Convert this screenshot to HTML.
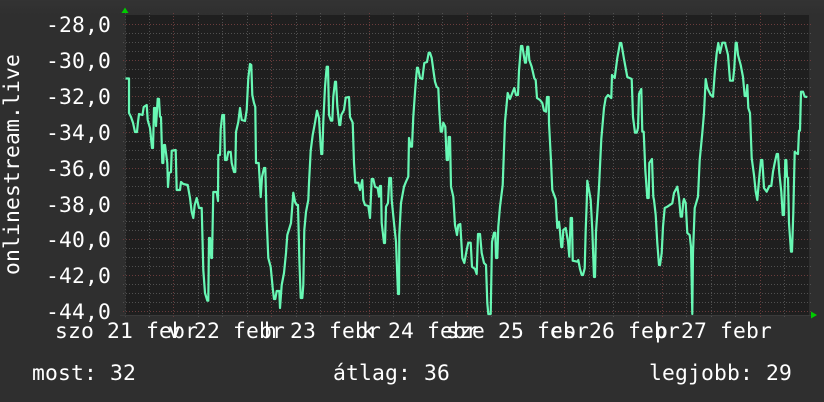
<!DOCTYPE html>
<html><head><meta charset="utf-8">
<style>
html,body{margin:0;padding:0;background:#2f2f2f;width:824px;height:402px;overflow:hidden}
svg{display:block}
text{font-family:"DejaVu Sans Mono","Liberation Mono",monospace;font-size:21.33px;letter-spacing:.16px;fill:#fff;white-space:pre}
</style></head><body>
<svg width="824" height="402" viewBox="0 0 824 402" xmlns="http://www.w3.org/2000/svg">
<defs><linearGradient id="top" x1="0" y1="0" x2="0" y2="1"><stop offset="0" stop-color="#333"/><stop offset="1" stop-color="#2f2f2f"/></linearGradient></defs>
<rect width="824" height="402" fill="#2f2f2f"/>
<rect width="824" height="15" fill="url(#top)"/>
<rect x="125" y="15" width="684" height="301" fill="#1f1f1f"/>
<g shape-rendering="crispEdges" fill="none" stroke-width="1" stroke-dasharray="1 2">
<path stroke="#505050" d="M123 33.500H811M123 42.500H811M123 51.500H811M123 69.500H811M123 78.500H811M123 87.500H811M123 105.500H811M123 114.500H811M123 123.500H811M123 141.500H811M123 150.500H811M123 159.500H811M123 177.500H811M123 186.500H811M123 195.500H811M123 212.500H811M123 221.500H811M123 230.500H811M123 248.500H811M123 257.500H811M123 266.500H811M123 284.500H811M123 293.500H811M123 302.500H811"/>
<path stroke="#505050" d="M125.500 13V318M149.500 13V318M198.500 13V318M222.500 13V318M247.500 13V318M296.500 13V318M320.500 13V318M344.500 13V318M393.500 13V318M418.500 13V318M442.500 13V318M491.500 13V318M515.500 13V318M540.500 13V318M589.500 13V318M613.500 13V318M638.500 13V318M686.500 13V318M711.500 13V318M735.500 13V318M784.500 13V318"/>
<path stroke="#6a3c3c" d="M123 24.500H811M123 60.500H811M123 96.500H811M123 132.500H811M123 168.500H811M123 203.500H811M123 239.500H811M123 275.500H811M123 311.500H811"/>
<path stroke="#6a3c3c" d="M173.500 13V318M271.500 13V318M369.500 13V318M467.500 13V318M564.500 13V318M662.500 13V318M760.500 13V318"/>
</g>
<path d="M120 315.500H811" stroke="#3a3a3a" stroke-width="1" shape-rendering="crispEdges"/>
<path d="M125.500 12V318" stroke="#3a3a3a" stroke-width="1" shape-rendering="crispEdges" opacity=".5"/>
<polygon points="125,7.500 128.500,13 121.500,13" fill="#0c0"/>
<polygon points="811,311.500 817,315 811,318.500" fill="#0c0"/>
<polyline fill="none" stroke="#68f8b4" stroke-width="2.2" stroke-linejoin="round" points="125.500,78.500 129,78.500 129,113 131,117 133,122.700 135,132 137,132 138,122 139,114 142.500,115 143.700,107 146.700,105 147.700,120 150,128 152,148 153,148 154,108 155.300,108 156,126 157.700,98.700 159,99 160,116.700 161,117 162.300,163 163.300,163 164,145 165,145 167.300,163 168,187 169,173 171,172 171.700,150.700 175.700,150 176.700,190 180,190 181,182 183.300,184 187.700,185 190,198 191.700,212 193.300,218 194.700,205 196.700,198 199,208 201.700,208 203.300,270 205,293 207.300,300.700 208.300,300.700 209,238 210,238 211.300,258 212,258 213.300,192 216.700,192 218,201 218.300,155 220,155 220.700,129 222.300,115 224,115 225,160 226.700,160 228.300,152 230.700,152 231.700,163 234,172 235.300,172 236,132 238.300,122 240,108 241.700,120 245,121 246.700,110 248.300,78 250,64 251.300,65 252.300,95 254,103 255.300,107 256,163 258.700,163 260.700,197 262,177 264,168 265.300,168 266.700,220 268.300,258 270.700,267 272.700,288 274,299 275.300,299 276.700,291 279.300,291 280,308 281.700,285 284,273 286,253 287.300,235 291,223 293.300,192.700 295,201.700 296.700,205 298,205 299.300,258 300.700,298 302.300,298 303.300,285 304.300,230 306,212 308.300,200 309,183 310.700,150.700 312.700,135 315,122.700 317,110.700 319,118 320.700,146.700 321.300,154 322.300,154 323.300,121.700 325,87 326.700,66.700 328,66.700 329,115 331,120.700 332.300,120.700 333.300,96.700 335,81.700 336,81.700 337.300,106 339.300,125 340.300,125 341.300,115 344,110 345.700,97.700 349,97 350,117 352.700,122.700 354,163 355.300,182.700 358.300,182.700 360,190 362.300,180 363.300,200 365,205 368.300,206 370,218 371.700,179 373.300,179 375,186.700 377.700,188 379,196.700 380,186 381,186 381.700,223 384,243 385,243 386,206.700 388,203 389.300,178 391,178 391.700,200 394,223 396,241.700 398,294 399,294 399.300,235 401,203 404,186.700 406,181.700 408.300,176.700 409,138 410.700,146.700 412,146.700 413.300,116.700 415.300,88 417,67.700 418,67.700 420,78 422.300,79 424.300,63 427,62 428.700,52.700 430,52.700 431.700,58 433.700,72.700 435,81.700 436.700,87 438.300,88 439.300,110 440.700,131.700 442,131.700 443.300,122.700 445.300,126.700 446.700,160 448,160 448.700,137 450,137 451,186.700 453.300,196.700 455,225 457,235 458.300,225 460.300,224 462.300,258 464.300,263 466.700,250 468.300,242.700 470.700,242.700 472,266.700 475,269 476.700,274 478,234 480,234 481.700,253 484,263 486,265 487.300,303 488.300,314 490.700,314 492,241.700 494,232.700 495.300,232.700 496,258 497.300,258 498.300,226.700 500,206.700 502.700,185 505,121.700 507.700,93 510,99 512.300,93 514.300,88 516,95 518,95 519,70.700 521,46 522.300,46 525,62.700 526,62.700 527.300,46.700 528.300,46.700 529.300,60 531.700,66.700 534.300,78.300 535.700,80 537,98 540,100 542.300,103 544,110.700 546,111.700 547,97 548.700,97 549,123 551,160.700 552.300,190 555.700,199.300 557.300,228 559,221.700 559.700,228 561.300,247 562.300,247 563.300,230 565.700,228 568,241.700 569.300,256.700 570.700,218 572,218 572.700,260.700 577.300,261.700 578.300,260 580,269 581.700,275 583,275 584.700,268.300 585.700,230 586.700,203.300 587.300,180.700 589.300,191.700 590.700,200 592.300,230 594,277 595,277 596,231.700 597.300,213 599,187 601.300,139 604,108 605.700,98 608,95 611.300,98 612,75 614.700,78 617.300,58 620,43 621.300,43 624,59 627.300,77 631.700,79 633,117 635,132.700 636.700,132.700 638,128 639,94 641.300,89 642.300,131.700 643.700,131.700 645.300,170 647.300,198 648.700,198 649.300,163 652,159 653.300,196.700 654,200 655.700,215 657.300,243 659,265 660,265 661.700,253 663,226.700 664.700,208 667.300,206.700 672.300,203.300 674,193 677.300,186.700 679,198 680.700,216.700 682,216.700 683.300,201.700 684,199 685.700,203 687.300,233 689.700,235 691,246.700 692.300,314 693,253 694.700,208 698,196.700 699.700,160 702.300,133 704,113 705.700,79 707.300,88 710.700,95 713,96.700 714.700,74 716.700,53 718.300,43 720,53 722.300,42.700 725,42.700 728,55 730,80.700 733,80.700 734.300,68 735.700,42.700 736.700,42.700 738,55 740.700,65 743,77 744.700,96 746.300,96 747.300,85 748.300,108 750,113 751.700,158 754,175 755.700,191.700 757.300,200 759,180 761,160 762.300,160 764,188 766.700,191.700 769.300,186 771.300,186 773,171.700 774.700,163 776.700,154 778,154 779.300,173 781.300,191.700 782.700,215 784,215 785.300,160 786.300,160 787,176.700 788,178 789,223 791,251.700 792,251.700 793.300,213 794.700,151.700 796,153 798,154 799,130.700 800,130.700 801,91.700 803,91.700 804.700,96.700 807.300,97"/>
<g>
<text x="46" y="32">-28,0</text>
<text x="46" y="68">-30,0</text>
<text x="46" y="104">-32,0</text>
<text x="46" y="140">-34,0</text>
<text x="46" y="176">-36,0</text>
<text x="46" y="212">-38,0</text>
<text x="46" y="247">-40,0</text>
<text x="46" y="283">-42,0</text>
<text x="46" y="319">-44,0</text>
</g>
<text transform="translate(19,275) rotate(-90)">onlinestream.live</text>
<text x="55" y="338">szo 21 febr</text>
<text x="168" y="338">v 22 febr</text>
<text x="264" y="338">h 23 febr</text>
<text x="362" y="338">k 24 febr</text>
<text x="446" y="338">sze 25 febr</text>
<text x="550" y="338">cs 26 febr</text>
<text x="655" y="338">p 27 febr</text>
<text x="32" y="380">most: 32</text>
<text x="333" y="380">átlag: 36</text>
<text x="649" y="380">legjobb: 29</text>
</svg>
</body></html>
